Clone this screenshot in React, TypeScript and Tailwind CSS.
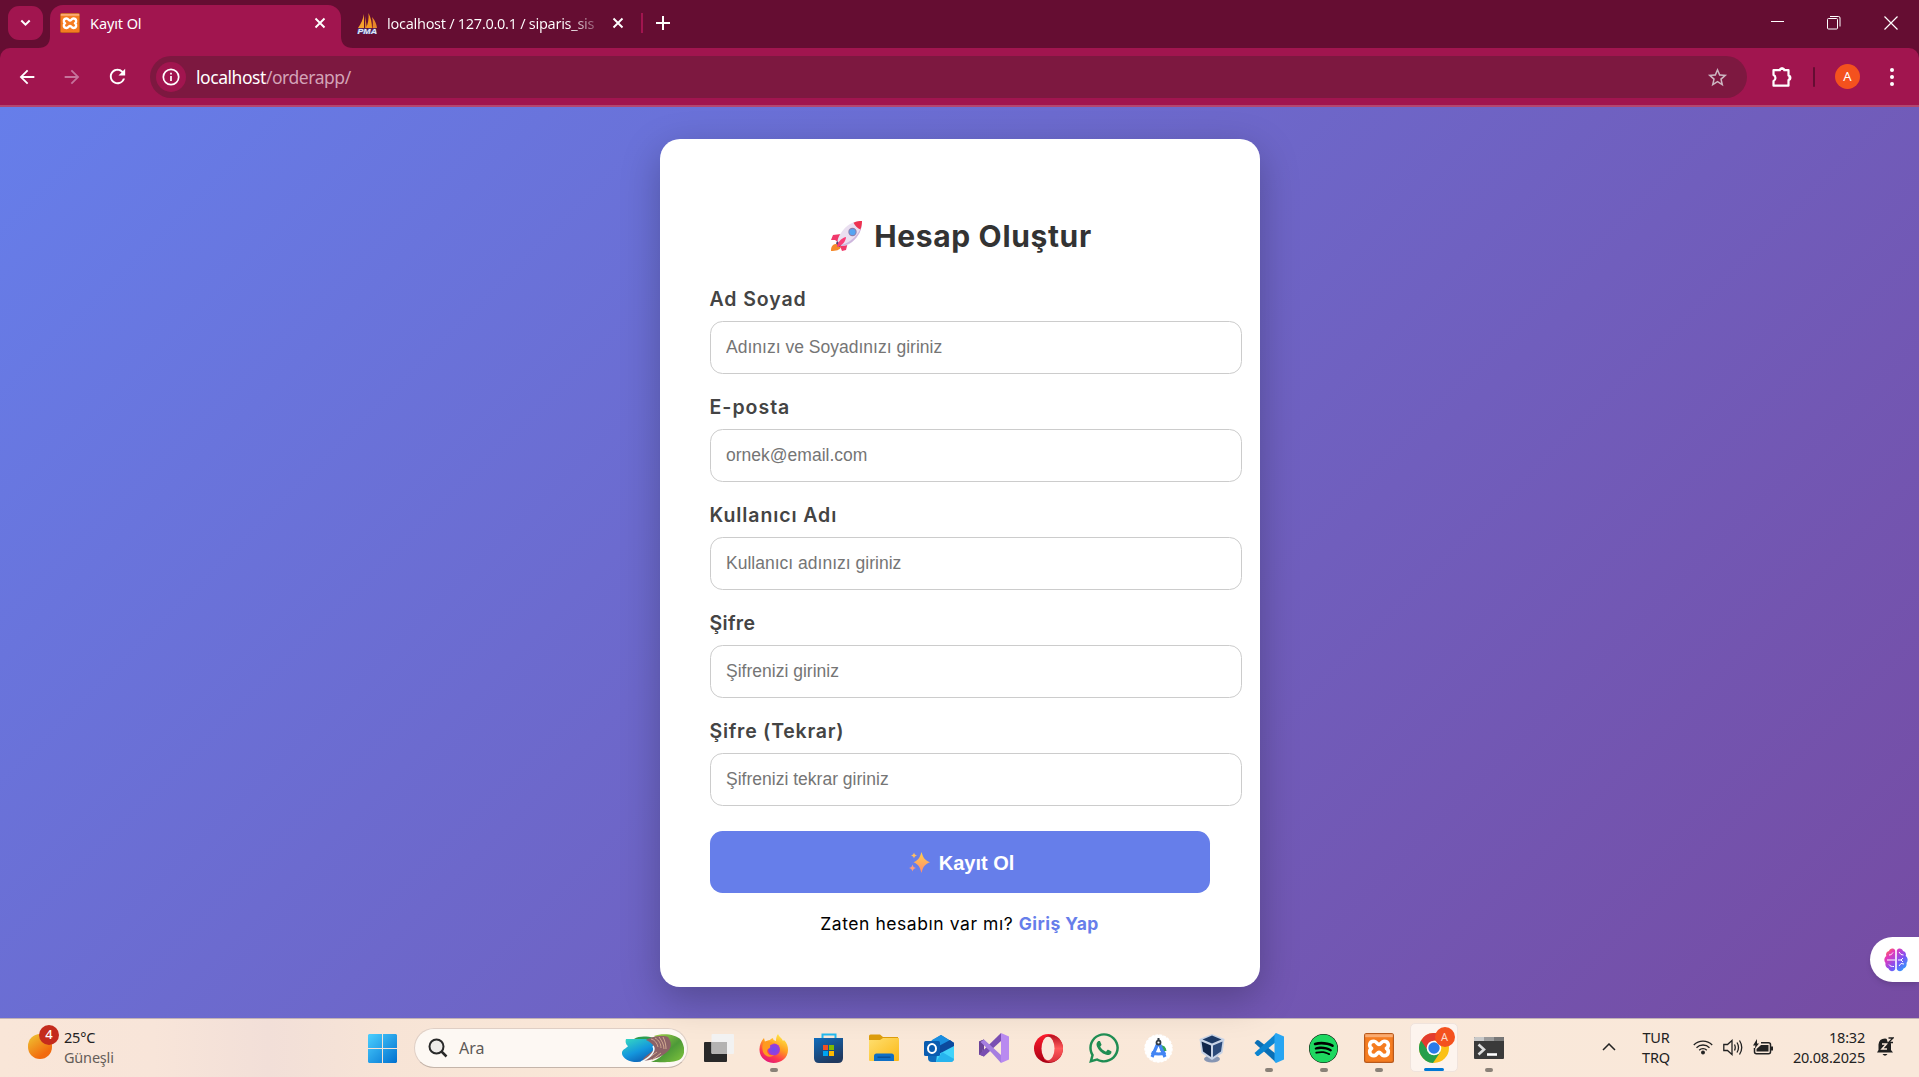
import React from "react";
import { FaSpotify, FaWhatsapp } from "react-icons/fa";
import { MdStarBorder, MdRefresh, MdArrowBack, MdArrowForward } from "react-icons/md";

const UI = "font-['Noto_Sans','Open_Sans',sans-serif]";
const POP = "font-['Inter','Open_Sans',sans-serif]";
const ARIAL = "font-['Liberation_Sans',Arial,sans-serif]";

function Cross({ size = 12 }: { size?: number }) {
  return (
    <svg width={size} height={size} viewBox="0 0 12 12" stroke="white" strokeWidth="1.9" fill="none">
      <path d="M1.5 1.5 10.5 10.5M10.5 1.5 1.5 10.5" />
    </svg>
  );
}

function Xampp({ size }: { size: number }) {
  return (
    <svg width={size} height={size} viewBox="0 0 30 30">
      <rect width="30" height="30" rx="2.5" fill="#b9591b" />
      <rect x="1.2" y="1.2" width="27.600" height="27.600" rx="1.5" fill="#f57c20" />
      <rect x="1.2" y="1.2" width="27.600" height="3" fill="#f9ab72" />
      <path
        d="M10 8.200c2.600 0 3.200 3.300 5 3.300s2.400-3.300 5-3.300c5.200 0 5.200 5.600 2.400 7.200 2.800 1.600 2.800 7.200-2.400 7.200-2.600 0-3.200-3.300-5-3.300s-2.400 3.300-5 3.300c-5.200 0-5.200-5.600-2.400-7.200-2.800-1.600-2.800-7.200 2.400-7.200z"
        fill="none" stroke="white" strokeWidth="3.600" strokeLinejoin="round"
      />
    </svg>
  );
}

function PmaIcon() {
  return (
    <svg width="21" height="21" viewBox="0 0 21 21">
      <path d="M7 1C6 6 4 11 1 15h6z" fill="#f6a22d" />
      <path d="M8 3v12h2z" fill="#d9822b" />
      <path d="M11.500 0C12 6 11 11 9 15h6c0-5-1-10-3.500-15z" fill="#f79a1e" />
      <path d="M15 4c1 4 1 8 .5 11H20c-.5-4-2-8-5-11z" fill="#e8862a" />
      <text x="0.500" y="20.500" fontSize="8" fontWeight="700" fontStyle="italic" textLength="19.500" lengthAdjust="spacingAndGlyphs" fill="#e6e9f8" stroke="#4a4f90" strokeWidth="1.200" paintOrder="stroke" fontFamily="Liberation Sans">PMA</text>
    </svg>
  );
}

function TabStrip() {
  return (
    <div className="flex h-12 w-full bg-[#650d32] pl-2">
      <div className="mt-1.5 flex h-[34px] w-[35px] items-center justify-center rounded-[11px] bg-[#a1154f]">
        <svg width="11" height="8" viewBox="0 0 11 8" fill="none" stroke="white" strokeWidth="2"><path d="M1.300 1.500 5.500 5.700 9.700 1.500" /></svg>
      </div>
      <div className="flex h-12 w-[7px] items-end overflow-visible">
        <svg className="-ml-[5px] shrink-0" width="12" height="12"><path d="M12 0v12H0C8 12 12 8 12 0z" fill="#a1154f" /></svg>
      </div>
      <div className="mt-[5px] flex h-[43px] w-[291px] items-center rounded-t-[13px] bg-[#a1154f] pb-[7px] pl-[10px] pr-[15px]">
        <Xampp size={20} />
        <span className={`${UI} ml-[10px] flex-1 whitespace-nowrap pt-px text-[14.500px] tracking-[-0.100px] text-white`}>Kayıt Ol</span>
        <Cross />
      </div>
      <div className="flex h-12 items-end">
        <svg width="12" height="12"><path d="M0 0v12h12C4 12 0 8 0 0z" fill="#a1154f" /></svg>
      </div>
      <div className="flex h-[46px] w-[288px] items-center pl-1">
        <PmaIcon />
        <span className={`${UI} ml-[9px] w-[210px] whitespace-nowrap bg-[linear-gradient(90deg,white_87%,#8b4a66)] bg-clip-text pt-px text-[14.500px] tracking-[-0.280px] text-transparent`}>
          localhost / 127.0.0.1 / siparis_sis
        </span>
        <span className="ml-[15px]"><Cross /></span>
      </div>
      <div className="mt-[13px] h-5 w-[2px] bg-[#a1154f]" />
      <svg className="ml-[13px] mt-4" width="14" height="14" stroke="white" strokeWidth="2"><path d="M7 0v14M0 7h14" /></svg>
      <div className="ml-auto flex h-[45px] items-center gap-[43px] pr-[21px]">
        <svg width="14" height="14" stroke="white"><path d="M1 5.500h13" /></svg>
        <svg width="14" height="14" stroke="white" fill="none"><rect x=".5" y="2.500" width="10" height="10.500" rx="1" /><path d="M3 .5h8.500a1.500 1.500 0 0 1 1.500 1.500v8.500" /></svg>
        <svg width="14" height="14" stroke="white" strokeWidth="1.200"><path d="M.5.500l13 13M13.500.5l-13 13" /></svg>
      </div>
    </div>
  );
}

function Toolbar() {
  return (
    <div className="w-full bg-[#650d32]">
      <div className="flex h-[59px] items-center rounded-t-[10px] border-b-2 border-[#b3466f] bg-[#a1154f] pl-4 pr-[15px]">
        <MdArrowBack size={22} color="white" />
        <MdArrowForward className="ml-[23px]" size={22} color="#c6739b" />
        <MdRefresh className="ml-[23px]" size={23} color="white" />
        <div className="ml-[21px] flex h-[42px] w-[1597px] items-center rounded-full bg-[#7d1840] pl-[6px] pr-[18px]">
          <div className="flex size-[30px] items-center justify-center rounded-full bg-[#a1154f]">
            <svg width="18" height="18" viewBox="0 0 18 18" fill="none" stroke="white" strokeWidth="1.700"><circle cx="9" cy="9" r="7.700" /><path d="M9 8v5M9 4.800v1.800" /></svg>
          </div>
          <span className={`${UI} ml-[10px] flex-1 whitespace-nowrap pt-[2px] text-[17.500px] tracking-[-0.450px] text-[#d3a3b7]`}>
            <span className="text-white">localhost</span>/orderapp/
          </span>
          <MdStarBorder className="mt-px" size={23} color="#ccb6c1" />
        </div>
        <svg className="ml-[23px]" width="24" height="24" viewBox="0 0 24 24">
          <path d="M3.500 5.200h6.300a2.300 2.300 0 0 1 4.500 0h4.200v5.300a2.300 2.300 0 0 1 0 4.500v5.700h-15v-4.800c2.600-1.200 2.600-4.800 0-6z" fill="none" stroke="white" strokeWidth="2.200" strokeLinejoin="round" />
          <path d="M9.500 5a2.500 2.500 0 0 1 5 0zM18.500 10.200a2.600 2.600 0 0 1 0 5.200z" fill="white" />
        </svg>
        <div className="ml-[19px] h-5 w-[2px] rounded bg-[#650d32]" />
        <div className={`${UI} ml-5 flex size-[25px] items-center justify-center rounded-full bg-[#f4511e] text-[13px] text-white`}>A</div>
        <svg className="ml-[27px]" width="10" height="20" fill="white"><circle cx="5" cy="3" r="2" /><circle cx="5" cy="10" r="2" /><circle cx="5" cy="17" r="2" /></svg>
      </div>
    </div>
  );
}

function Rocket() {
  return (
    <svg width="32" height="32" viewBox="0 0 32 32">
      <path d="M2 25c2-2 7-1 8 2-1 3-5 4-10 4 0-2 0-4 2-6z" fill="#f58a2c" />
      <path d="M2 15 10 14 7 22 4 20 0 20zM17 22l-2 8-4 1-2-5z" fill="#f0386b" />
      <path d="M31 1c-9 0-16 4-21 12-3 4-4 8-3 10 0 2 1 3 3 3 4 0 8-1 11-4 7-6 10-12 10-21z" fill="#eadff0" />
      <path d="M31 1c0 8-5 15-12 20-3 2-7 4-10.500 4.500C10 27 17 25 21 22c7-6 10-12 10-21z" fill="#cdb6dd" />
      <path d="M22.500 2.700C26 1.300 28 1 31 1c0 3-.4 5.500-1.600 8.500-2.400-1-5.400-3.800-6.900-6.800z" fill="#ee3250" />
      <circle cx="21.500" cy="12" r="4.200" fill="#8a7fae" /><circle cx="21.500" cy="12" r="3.100" fill="#55a4f2" />
      <path d="M6 21 10 25l-1.500 2L5 23.500z" fill="#54417a" />
      <path d="M6 27c0-4 4-9 9-10 0 4-4 9-9 10z" fill="#fb3d77" />
    </svg>
  );
}

function Sparkles() {
  return (
    <svg width="21" height="21" viewBox="0 0 21 21">
      <defs><linearGradient id="spark" x2="0" y2="1"><stop stopColor="#ffd04a" /><stop offset="1" stopColor="#ff8a70" /></linearGradient></defs>
      <path fill="url(#spark)" d="M12.500 0c1.800 6 3 8 8.500 10.300-5.500 2.300-6.700 4.200-8.500 10.700-1.800-6.500-3-8.400-8-10.700C9.500 8 10.700 6 12.500 0z" />
      <path fill="#ffbf63" d="M5 .5c.6 2 1 2.500 3 3-2 .6-2.400 1-3 3-.6-2-1-2.400-3-3 2-.5 2.400-1 3-3z" />
      <path fill="#ff9c7c" d="M3.500 12.500c.7 2.300 1.200 2.900 3.500 3.500-2.300.7-2.800 1.200-3.500 3.500-.7-2.300-1.200-2.800-3.500-3.500 2.300-.6 2.800-1.200 3.500-3.500z" />
    </svg>
  );
}

const fields = [
  { label: "Ad Soyad", hint: "Adınızı ve Soyadınızı giriniz", tracking: "tracking-[0.9px]" },
  { label: "E-posta", hint: "ornek@email.com", tracking: "tracking-[1px]" },
  { label: "Kullanıcı Adı", hint: "Kullanıcı adınızı giriniz", tracking: "tracking-[0.9px]" },
  { label: "Şifre", hint: "Şifrenizi giriniz", tracking: "tracking-[0.3px]" },
  { label: "Şifre (Tekrar)", hint: "Şifrenizi tekrar giriniz", tracking: "tracking-[0.75px]" },
];

function FormCard() {
  return (
    <div className="mx-auto h-[848px] w-[600px] rounded-[20px] bg-white px-[50px] pt-[74px] shadow-[0_12px_38px_rgba(0,0,0,0.25)]">
      <div className="flex h-[46px] items-center justify-center pl-[4px]">
        <Rocket />
        <h1 className={`${POP} ml-[11px] whitespace-nowrap text-[30px] font-bold tracking-[0.650px] text-[#333]`}>Hesap Oluştur</h1>
      </div>
      <div className="mt-[26px]">
        {fields.map((f) => (
          <div key={f.label} className="h-[108px]">
            <div className={`${POP} ${f.tracking} flex h-[30px] items-center whitespace-nowrap text-[19.500px] font-semibold text-[#444]`}>{f.label}</div>
            <input className={`${ARIAL} mt-[6px] h-[53px] w-[532px] rounded-[12.500px] border border-[#ccc] px-[15.500px] text-[17.500px] tracking-[0.010px] placeholder:text-[#757575]`} placeholder={f.hint} />
          </div>
        ))}
      </div>
      <button className={`${ARIAL} mt-[6px] flex h-[62px] w-[500px] items-center justify-center gap-[9px] rounded-[12.500px] bg-[#667eea] pl-[4px] text-[20px] font-bold text-white`}>
        <Sparkles />
        <span className="pt-px">Kayıt Ol</span>
      </button>
      <p className={`${POP} mt-[18px] whitespace-nowrap text-center text-[17.500px] tracking-[0.560px] text-black`}>
        Zaten hesabın var mı? <a className="font-bold tracking-[0.450px] text-[#667eea]">Giriş Yap</a>
      </p>
    </div>
  );
}

function Brain() {
  return (
    <svg width="24" height="24" viewBox="0 0 24 24">
      <defs><linearGradient id="brain" x1="0" y1="0" x2="1" y2="1"><stop stopColor="#ff8a1e" /><stop offset=".25" stopColor="#e838b8" /><stop offset=".6" stopColor="#7b52f5" /><stop offset="1" stopColor="#18b5ff" /></linearGradient></defs>
      <path fill="url(#brain)" d="M11.200 2.500C10-.5 5.500.3 5 3 2.500 3.500 1.500 6 2.300 8 0 9.500-.3 13 1.500 15c-.6 3 1 5 3 5.500 1.300 3.500 5.500 3.500 6.700.5zM12.800 2.500C14-.5 18.500.3 19 3c2.500.5 3.500 3 2.700 5 2.300 1.500 2.600 5 .8 7 .6 3-1 5-3 5.500-1.300 3.500-5.500 3.500-6.700.5z" />
      <path fill="none" stroke="white" strokeWidth="1" d="M5 7c2 0 3-1 4-2.500M3 12h8M5 16.500c1 2 3 2 5 2M15 4l2 2.500 2.500.5M14 12h3l2-2M17 12l2 2M15 18l2-2.500 3 .5" />
    </svg>
  );
}

function Page() {
  return (
    <main className="flex h-[911px] w-full bg-[linear-gradient(135deg,#667eea_0%,#764ba2_100%)] pt-8">
      <div className="w-[49px]" />
      <FormCard />
      <div className="mt-[798px] flex h-[45px] w-[49px] items-center rounded-l-full bg-white pl-[14px] shadow-md"><Brain /></div>
    </main>
  );
}

function TaskItem({ children, running }: { children: React.ReactNode; running?: boolean }) {
  return (
    <div className="flex h-[58px] w-[55px] flex-col items-center pt-[13px]">
      <div className="flex size-[32px] items-center justify-center">{children}</div>
      {running && <div className="mt-[4px] h-1 w-2 rounded-full bg-[#8a8178]" />}
    </div>
  );
}

function WindowsLogo() {
  return (
    <svg width="29" height="29" viewBox="0 0 29 29">
      <defs><linearGradient id="win" x2="1" y2="1" gradientUnits="objectBoundingBox"><stop stopColor="#4cd0ff" /><stop offset="1" stopColor="#0070cf" /></linearGradient></defs>
      <path fill="url(#win)" d="M1 0h13v14H0V1zM15 0h13l1 1v13H15zM0 15h14v14H1l-1-1zM15 15h14v13l-1 1H15z" />
    </svg>
  );
}

function SearchArt() {
  return (
    <svg width="62" height="29" viewBox="0 0 62 29">
      <defs>
        <linearGradient id="sea" x2=".6" y2="1"><stop stopColor="#37dcc0" /><stop offset=".6" stopColor="#1497dd" /><stop offset="1" stopColor="#0e62b5" /></linearGradient>
        <linearGradient id="land" x2="1" y2="1"><stop stopColor="#a9d44a" /><stop offset=".55" stopColor="#4d9a38" /><stop offset="1" stopColor="#82c63c" /></linearGradient>
      </defs>
      <path fill="#2f9d4e" d="M12 5c5-3 12-3 20-1l-6 5z" />
      <path fill="url(#sea)" d="M4 5h20c6 2 11 6 9 11-2 6-9 12-18 12C6 28-1 23 0 18c1-3 5-4 6-6-2-1-3-4-2-7z" />
      <path fill="url(#land)" d="M32 2c8-3 22-2 27 4 5 8 4 17-2 20-6 3-20 2-28 2 10-4 16-9 13-16-2-4-6-7-10-10z" />
      <path fill="#8c6266" d="M24 6c6-4 18-5 22-3 4 5 4 11-1 15-5 4-9 7-24 9-1-4 9-8 11-12 0-5-4-7-8-9z" />
      <path stroke="#d0a98f" strokeWidth="1" fill="none" d="M29 5c4 1 6 4 7 8M33 4c4 2 6 6 6 10M37 3c3 4 5 8 5 12M41 3c2 4 3 8 3 12M25 25l10-7M30 26l9-7" />
      <path stroke="#f1fbff" strokeWidth="1.500" fill="none" d="M31 12c3 5-2 11-12 16" />
    </svg>
  );
}

function Firefox() {
  return (
    <svg width="29" height="29" viewBox="0 0 29 29">
      <defs>
        <linearGradient id="ff" x1=".8" y1="0" x2=".3" y2="1"><stop stopColor="#fff04a" /><stop offset=".45" stopColor="#ff9a1f" /><stop offset=".75" stopColor="#ff3a4e" /><stop offset="1" stopColor="#e0167c" /></linearGradient>
        <radialGradient id="ffp"><stop stopColor="#6b4df0" /><stop offset="1" stopColor="#a13ad6" /></radialGradient>
      </defs>
      <path fill="url(#ff)" d="M19 0c1 3 4 4 5 7l1-1c3 3 4 6 4 10 0 8-7 13-14.500 13S0 23 .5 15C.7 11 2 7 5 4l1 4c1-1 3-2 5-2 1-1 1.500-1.500 3-2 0 2 1 2.500 3 3 0-3 .5-5 2-7z" />
      <circle cx="15" cy="15.500" r="6" fill="url(#ffp)" />
      <path fill="#ff9a1f" d="M5 8c3-2 8 0 10 2-3 0-4 1-4 2 1 2-1 2-3 4 0 4 3 6 7 5-3 3-9 2-11-3C3 14 3 11 5 8z" />
    </svg>
  );
}

function StoreIcon() {
  return (
    <svg width="29" height="30" viewBox="0 0 29 30">
      <defs><linearGradient id="st" x2=".5" y2="1"><stop stopColor="#0f6cbd" /><stop offset="1" stopColor="#20395f" /></linearGradient></defs>
      <path d="M8.500 6V1.500h13V6" fill="none" stroke="#22b8ee" strokeWidth="2" />
      <path d="M0 5h29v20q0 5-5 5H5q-5 0-5-5z" fill="url(#st)" />
      <path fill="#f25022" d="M9 12h5v5H9z" /><path fill="#7fba00" d="M15 12h5v5h-5z" /><path fill="#00a4ef" d="M9 18h5v5H9z" /><path fill="#ffb900" d="M15 18h5v5h-5z" />
    </svg>
  );
}

function Explorer() {
  return (
    <svg width="30" height="28" viewBox="0 0 30 28">
      <defs><linearGradient id="fo" x2="1" y2="1"><stop stopColor="#ffdf70" /><stop offset="1" stopColor="#fbb815" /></linearGradient></defs>
      <path d="M0 2q0-1.500 1.500-1.500H11L14 3h15v6H0z" fill="#dc9c0c" />
      <path d="M0 6h11l3-2h16v22q0 1-1 1H1q-1 0-1-1z" fill="url(#fo)" />
      <path d="M5 27v-5q0-2.500 2.500-2.500h15Q25 19.500 25 22v5z" fill="#0f6fc5" /><path d="M8.500 23.200h13" stroke="#0a4a8c" strokeWidth="1.200" />
    </svg>
  );
}

function Outlook() {
  return (
    <svg width="30" height="27" viewBox="0 0 30 27">
      <path d="M4 8 17 0l13 8v15q0 4-4 4H8q-4 0-4-4z" fill="#0f6cbd" />
      <path d="M8 5 17 0l13 8-14 9-10-5z" fill="#1a8ee0" /><path d="M13 12 26 5l4 3v4l-14 9z" fill="#0c4a9e" />
      <path d="m13 20 17-9v12q0 4-4 4H12z" fill="#41d3fa" /><path d="M12 27h14q3 0 4-3L18 17z" fill="#27b4ee" />
      <rect y="6" width="16" height="15" rx="1.500" fill="#0a5cb0" /><ellipse cx="8" cy="13.500" rx="4" ry="4.500" fill="none" stroke="white" strokeWidth="2" />
    </svg>
  );
}

function VisualStudio() {
  return (
    <svg width="30" height="30" viewBox="0 0 30 30">
      <path fillRule="evenodd" d="M0 8.500 5 6.500v17L0 21.500zM0 8.500v13L3.500 19v-8z" fill="#6b4399" />
      <path d="M0 8.500 5 6.500 5 8 3.500 19v3L0 21.500z" fill="#6b4399" />
      <path d="M0 21.500 22 0v8L5 23.500z" fill="#7a4eb2" />
      <path d="M5 6.500 22 22v8L12.500 19.500 1.500 9z" fill="#a57ee0" />
      <path d="m22 0 8 3.500v23L22 30z" fill="#b98af0" />
    </svg>
  );
}

function Opera() {
  return (
    <svg width="29" height="29" viewBox="0 0 29 29">
      <defs>
        <linearGradient id="op" x2="0" y2="1"><stop stopColor="#ff1b2d" /><stop offset="1" stopColor="#a70014" /></linearGradient>
        <linearGradient id="opr" x2="0" y2="1"><stop stopColor="#b5101f" /><stop offset=".5" stopColor="#ff5a5a" /><stop offset="1" stopColor="#d9303a" /></linearGradient>
      </defs>
      <circle cx="14.500" cy="14.500" r="14.500" fill="url(#op)" />
      <path d="M10 4C15-1 21 1 24.500 4A14.500 14.500 0 0 1 24.500 25C21 28 15 30 10 25z" fill="url(#opr)" />
      <ellipse cx="14" cy="14.500" rx="6.500" ry="11.800" fill="#fae9dc" />
    </svg>
  );
}

function AndroidStudio() {
  return (
    <svg width="29" height="29" viewBox="0 0 29 29">
      <circle cx="14.500" cy="14.500" r="13.500" fill="white" stroke="white" strokeWidth="1.500" strokeDasharray="3 1" />
      <path d="M16 11q6 0 6.500 6h-6z" fill="#34a853" />
      <path d="M14.500 8 8 23M14.500 8 21 23M7.500 18.500q7 3 14 0" stroke="#4285f4" strokeWidth="3.200" fill="none" />
      <circle cx="14.500" cy="8.500" r="2" fill="white" stroke="#303a44" strokeWidth="1.800" /><path d="M14.500 4v3" stroke="#303a44" strokeWidth="2" />
    </svg>
  );
}

function VirtualBox() {
  return (
    <svg className="-ml-[3px]" width="26" height="29" viewBox="0 0 26 29">
      <ellipse cx="13" cy="25" rx="8" ry="3.500" fill="#8796b3" />
      <path d="m13 0 12.500 5-2 14L13 26 2.500 19 .5 5z" fill="#c7d3e6" />
      <path d="m13 1.500 9.500 4L13 9.500l-9.500-4z" fill="#1d3a66" /><path d="M2.500 7.500 12 11.500V23l-8-5.500z" fill="#10264a" /><path d="m23.500 7.500-9.500 4V23l8-5.500z" fill="#2b4a7a" />
    </svg>
  );
}

function VsCode() {
  return (
    <svg width="30" height="30" viewBox="0 0 30 30">
      <path d="M.5 10 2.500 7.500q1.200-1 2.500 0L22 21v8.500z" fill="#0a6fb5" />
      <path d="M.5 20 2.500 22.500q1.200 1 2.500 0L22 9V.5z" fill="#0b84d0" />
      <path d="M22 0l8 3.500v23L22 30q-1.500-1-1.500-2V2q0-1 1.500-2z" fill="#27a5f2" />
    </svg>
  );
}

function Chrome() {
  return (
    <svg width="30" height="30" viewBox="0 0 30 30">
      <circle cx="15" cy="15" r="15" fill="#fbc116" />
      <path d="M2 7.500A15 15 0 0 0 14 30l7.500-11.300L15 15z" fill="#269f4c" />
      <path d="M2 7.500A15 15 0 0 1 28 7.500H15L8.500 17z" fill="#e33b2e" />
      <circle cx="15" cy="15" r="7.300" fill="white" /><circle cx="15" cy="15" r="5.700" fill="#2a7bea" />
    </svg>
  );
}

function Terminal() {
  return (
    <svg width="30" height="22" viewBox="0 0 30 22">
      <rect width="30" height="22" rx="1" fill="#3a3a3a" /><path d="M0 4V1q0-1 1-1h9v4z" fill="#c9c9c9" /><path d="M10 0h10v4H10z" fill="#9b9b9b" /><path d="M20 0h9q1 0 1 1v3H20z" fill="#777" />
      <path d="m4.500 7.500 5.500 5-5.500 5" stroke="#ddd" strokeWidth="2.600" fill="none" /><path d="M13 17.500h10" stroke="white" strokeWidth="2.600" />
    </svg>
  );
}

function Taskbar() {
  return (
    <footer className={`${UI} flex h-[59px] w-full border-t border-[#c2b2b4] bg-[linear-gradient(90deg,#f9e6d8_0%,#f8e5d9_8%,#f2dfd8_14%,#f7e4d6_20%,#fae8d8_35%,#f9e8da_100%)] text-[#222]`}>
      <div className="flex w-[355px] pl-7">
        <div className="relative mt-[15px] h-[25px] w-[24px] rounded-full bg-[linear-gradient(145deg,#efbb2f_10%,#f26a0d_75%)]">
          <span className="absolute -top-[9px] left-[11px] flex size-5 items-center justify-center rounded-full bg-[#c42b1c] text-[13px] font-medium text-white">4</span>
        </div>
        <div className="ml-3 mt-[8px] whitespace-nowrap text-[14.500px] leading-5 tracking-[-0.200px]">
          <div>25°C</div>
          <div className="text-[#655d58]">Güneşli</div>
        </div>
      </div>
      <TaskItem><WindowsLogo /></TaskItem>
      <div className="ml-[4px] mt-[9px] flex h-[40px] w-[274px] items-center rounded-full border border-[#dfcfc5] border-b-[#c5b5aa] bg-[#fdf8f3] pl-[13px] pr-[3px]">
        <svg width="20" height="20" fill="none" stroke="#292929" strokeWidth="2"><circle cx="8.500" cy="8.500" r="7" fill="#eeebe8" /><path d="m13.500 13.500 5 5" strokeWidth="2.500" /></svg>
        <span className="ml-[11px] flex-1 text-[16px] text-[#5e5a57]">Ara</span>
        <SearchArt />
      </div>
      <div className="ml-[3px] flex">
        <TaskItem>
          <svg width="30" height="28"><rect y="8" width="23" height="20" rx="1" fill="#292929" /><rect x="7.500" width="22.500" height="20" rx="1" fill="#f2f2f2" /><path d="M7.500 8H23v12H8.500l-1-1z" fill="#b4b3b2" /></svg>
        </TaskItem>
        <TaskItem running><Firefox /></TaskItem>
        <TaskItem><StoreIcon /></TaskItem>
        <TaskItem><Explorer /></TaskItem>
        <TaskItem><Outlook /></TaskItem>
        <TaskItem><VisualStudio /></TaskItem>
        <TaskItem><Opera /></TaskItem>
        <TaskItem><FaWhatsapp className="shrink-0" size={34} color="#1f8d53" /></TaskItem>
        <TaskItem><AndroidStudio /></TaskItem>
        <TaskItem><VirtualBox /></TaskItem>
        <TaskItem running><VsCode /></TaskItem>
        <TaskItem running><div className="rounded-full bg-black"><FaSpotify size={29} color="#1ed760" /></div></TaskItem>
        <TaskItem running><Xampp size={30} /></TaskItem>
        <div className="mx-[3.500px] mt-[4px] flex h-[49px] w-12 flex-col items-center rounded-[5px] border border-[#f0e3dc] bg-[#fdf4ee] pt-[9px]">
          <div className="relative">
            <Chrome />
            <span className="absolute -top-[6px] left-[16px] flex size-5 items-center justify-center rounded-full bg-[#f4511e] text-[11px] text-[#fbd9c9]">A</span>
          </div>
          <div className="mt-[5px] h-1 w-5 rounded-full bg-[#0078d4]" />
        </div>
        <TaskItem running><Terminal /></TaskItem>
      </div>
      <div className="ml-auto flex h-[56px] items-center pr-[25px] text-[14.500px] leading-5">
        <svg width="14" height="8" fill="none" stroke="#222" strokeWidth="1.500"><path d="m1 7 6-6 6 6" /></svg>
        <div className="ml-[26px] w-[28px] whitespace-nowrap text-center tracking-[-0.200px]">TUR<br />TRQ</div>
        <svg className="ml-[23px]" width="20" height="16" fill="none" stroke="#222" strokeWidth="1.300"><path d="M.8 6a13 13 0 0 1 18.400 0M3.500 8.700a9.200 9.200 0 0 1 13 0M6.200 11.300a5.300 5.300 0 0 1 7.600 0" /><circle cx="10" cy="13.500" r="1.300" fill="#222" /></svg>
        <svg className="ml-[10px]" width="20" height="17" fill="none" stroke="#222" strokeWidth="1.300"><path d="M.8 5.500h3.700L9 1.500v14l-4.500-4H.8zM11.500 5.500q1.500 3 0 6M14 3.500q3 5 0 10M16.500 1.500q4.500 7 0 14" /></svg>
        <svg className="ml-[10px]" width="20" height="17" fill="none" stroke="#222" strokeWidth="1.500"><path d="M8 3.800h7.500q2 0 2 2v7q0 2-2 2h-12q-2 0-2-2V9" /><path d="M8 6h7.500v6.500H3.500V10L8 6z" fill="#222" stroke="none" /><path d="M18 7.500h2v4h-2zM4 0 0 6.500h2.500L1.500 10 6 4.500H4z" fill="#222" stroke="none" /></svg>
        <div className="ml-[18px] w-[74px] whitespace-nowrap text-right tracking-[-0.200px]"><div>18:32</div><div>20.08.2025</div></div>
        <svg className="ml-[11px]" width="18" height="20"><path d="M1 15.500 2.500 13V7.500Q3 1.500 9 1.500q6 0 6 6V13l2 2.500zM6.500 17h5Q9 20.500 6.500 17z" fill="#1f1f1f" /><path d="M6 7h4.500L6 12h5" fill="none" stroke="#f8e7da" strokeWidth="1.500" /><path d="M10 0h8v6h-6z" fill="#f8e7da" /><path d="M12.500 1H17l-4.500 4.500H17" fill="none" stroke="#1f1f1f" strokeWidth="1.300" /></svg>
      </div>
    </footer>
  );
}

export default function App() {
  return (
    <div className="h-[1077px] w-[1919px] overflow-hidden">
      <TabStrip />
      <Toolbar />
      <Page />
      <Taskbar />
    </div>
  );
}
